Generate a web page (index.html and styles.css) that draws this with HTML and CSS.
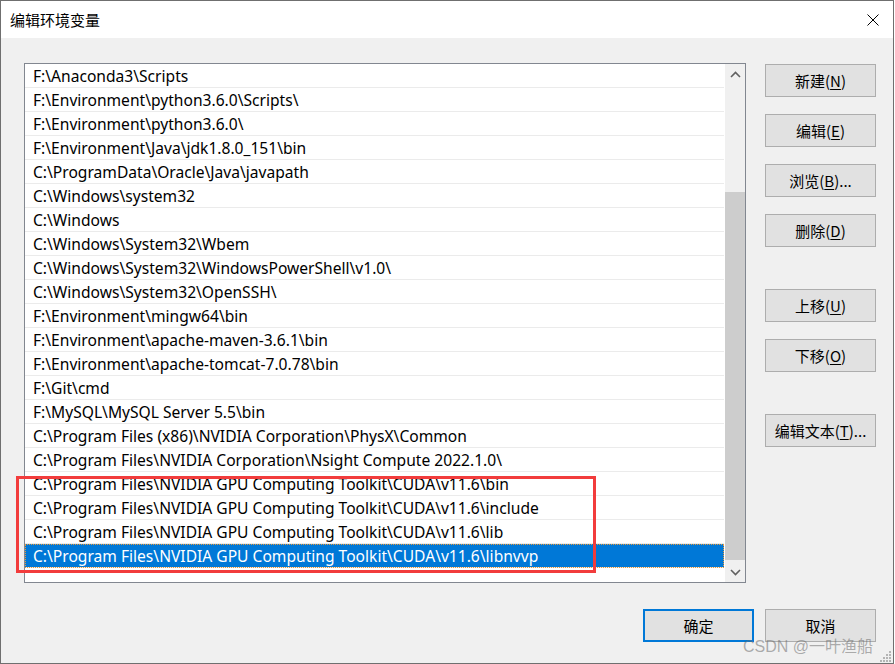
FILE: index.html
```html
<!DOCTYPE html>
<html lang="zh-CN">
<head>
<meta charset="utf-8">
<title>编辑环境变量</title>
<link rel="stylesheet" href="styles.css">
</head>
<body>
<div class="window">
  <div class="titlebar">
    <span class="title">编辑环境变量</span>
    <svg class="close" width="12" height="12" viewBox="0 0 12 12"><path d="M0.5 0.5 L11.5 11.5 M11.5 0.5 L0.5 11.5" stroke="#000" stroke-width="1" fill="none"/></svg>
  </div>
  <div class="body">
    <div class="main">
      <div class="list">
        <div class="rows">
          <div class="row">F:\Anaconda3\Scripts</div>
          <div class="row">F:\Environment\python3.6.0\Scripts\</div>
          <div class="row">F:\Environment\python3.6.0\</div>
          <div class="row">F:\Environment\Java\jdk1.8.0_151\bin</div>
          <div class="row">C:\ProgramData\Oracle\Java\javapath</div>
          <div class="row">C:\Windows\system32</div>
          <div class="row">C:\Windows</div>
          <div class="row">C:\Windows\System32\Wbem</div>
          <div class="row">C:\Windows\System32\WindowsPowerShell\v1.0\</div>
          <div class="row">C:\Windows\System32\OpenSSH\</div>
          <div class="row">F:\Environment\mingw64\bin</div>
          <div class="row">F:\Environment\apache-maven-3.6.1\bin</div>
          <div class="row">F:\Environment\apache-tomcat-7.0.78\bin</div>
          <div class="row">F:\Git\cmd</div>
          <div class="row">F:\MySQL\MySQL Server 5.5\bin</div>
          <div class="row">C:\Program Files (x86)\NVIDIA Corporation\PhysX\Common</div>
          <div class="row">C:\Program Files\NVIDIA Corporation\Nsight Compute 2022.1.0\</div>
          <div class="row">C:\Program Files\NVIDIA GPU Computing Toolkit\CUDA\v11.6\bin</div>
          <div class="row">C:\Program Files\NVIDIA GPU Computing Toolkit\CUDA\v11.6\include</div>
          <div class="row">C:\Program Files\NVIDIA GPU Computing Toolkit\CUDA\v11.6\lib</div>
          <div class="row selected">C:\Program Files\NVIDIA GPU Computing Toolkit\CUDA\v11.6\libnvvp</div>
        </div>
        <div class="scrollbar">
          <div class="sb-btn"><svg width="11" height="7" viewBox="0 0 11 7"><path d="M1 6 L5.5 1.5 L10 6" stroke="#606060" stroke-width="1.6" fill="none"/></svg></div>
          <div class="sb-track"><div class="sb-thumb"></div></div>
          <div class="sb-btn"><svg width="11" height="7" viewBox="0 0 11 7"><path d="M1 1 L5.5 5.5 L10 1" stroke="#606060" stroke-width="1.6" fill="none"/></svg></div>
        </div>
      </div>
      <div class="side">
        <button class="btn">新建(<u>N</u>)</button>
        <button class="btn">编辑(<u>E</u>)</button>
        <button class="btn">浏览(<u>B</u>)...</button>
        <button class="btn">删除(<u>D</u>)</button>
        <button class="btn spaced">上移(<u>U</u>)</button>
        <button class="btn">下移(<u>O</u>)</button>
        <button class="btn spaced">编辑文本(<u>T</u>)...</button>
      </div>
    </div>
    <div class="footer">
      <button class="btn default">确定</button>
      <button class="btn">取消</button>
    </div>
  </div>
  <div class="highlight"></div>
  <div class="watermark">CSDN @一叶渔船</div>
  <svg class="grip" width="12" height="12" viewBox="0 0 12 12">
    <rect x="9" y="1" width="2" height="2" fill="#b4b4b4"/>
    <rect x="6" y="4" width="2" height="2" fill="#b4b4b4"/>
    <rect x="9" y="4" width="2" height="2" fill="#b4b4b4"/>
    <rect x="3" y="7" width="2" height="2" fill="#b4b4b4"/>
    <rect x="6" y="7" width="2" height="2" fill="#b4b4b4"/>
    <rect x="9" y="7" width="2" height="2" fill="#b4b4b4"/>
    <rect x="0" y="10" width="2" height="2" fill="#b4b4b4"/>
    <rect x="3" y="10" width="2" height="2" fill="#b4b4b4"/>
    <rect x="6" y="10" width="2" height="2" fill="#b4b4b4"/>
    <rect x="9" y="10" width="2" height="2" fill="#b4b4b4"/>
  </svg>
</div>
</body>
</html>
```
FILE: styles.css
```css
* { box-sizing: border-box; }
html, body {
  margin: 0;
  padding: 0;
  background: #ffffff;
}
body {
  font-family: "Noto Sans", "Noto Sans CJK SC", sans-serif;
  font-size: 15px;
  color: #000;
}
.window {
  position: relative;
  width: 894px;
  height: 664px;
  border: 1px solid #6f6f6f;
  display: flex;
  flex-direction: column;
  background: #f0f0f0;
}
.titlebar {
  height: 37px;
  background: #ffffff;
  display: flex;
  align-items: center;
  justify-content: space-between;
  padding: 0 14px 0 9px;
}
.title {
  font-family: "Noto Sans CJK SC", sans-serif;
  font-size: 15px;
  line-height: 1;
}
.body {
  flex: 1;
  padding: 25px 17px 0 23px;
  display: flex;
  flex-direction: column;
}
.main {
  display: flex;
  gap: 19px;
}
.list {
  width: 722px;
  height: 520px;
  border: 1px solid #828790;
  background: #ffffff;
  display: flex;
}
.rows {
  flex: 1;
  margin-right: 1px;
}
.row {
  height: 24px;
  font-size: 15.6px;
  line-height: 21px;
  padding: 2px 0 0 8px;
  border-bottom: 1px solid #ebebeb;
  white-space: nowrap;
  overflow: hidden;
}
.row.selected {
  background: #0078d7;
  color: #ffffff;
  outline: 1px dotted #e89a3c;
  outline-offset: -1px;
}
.scrollbar {
  width: 20px;
  background: #f0f0f0;
  display: flex;
  flex-direction: column;
}
.sb-btn {
  height: 20px;
  display: flex;
  align-items: center;
  justify-content: center;
}
.sb-track {
  flex: 1;
  padding-top: 108px;
}
.sb-thumb {
  height: 368px;
  background: #cdcdcd;
}
.side {
  width: 111px;
  padding-top: 1px;
  display: flex;
  flex-direction: column;
  gap: 17px;
}
.btn {
  width: 111px;
  height: 33px;
  background: #e1e1e1;
  border: 1px solid #adadad;
  font-family: "Noto Sans CJK SC", sans-serif;
  font-size: 15px;
  color: #000;
  padding: 0;
  margin: 0;
}
.btn u { text-underline-offset: 2px; }
.btn.spaced { margin-top: 25px; }
.btn.default { border: 2px solid #0078d7; }
.footer {
  margin-top: 26px;
  display: flex;
  justify-content: flex-end;
  gap: 11px;
}
.highlight {
  position: absolute;
  left: 15px;
  top: 475px;
  width: 580px;
  height: 97px;
  border: 3px solid #f23c3c;
}
.watermark {
  position: absolute;
  left: 742px;
  top: 632px;
  font-family: "Liberation Sans", "Noto Sans CJK SC", sans-serif;
  font-size: 16px;
  color: rgba(110, 110, 110, 0.55);
  white-space: nowrap;
}
.grip {
  position: absolute;
  right: 1px;
  bottom: 1px;
}
```
